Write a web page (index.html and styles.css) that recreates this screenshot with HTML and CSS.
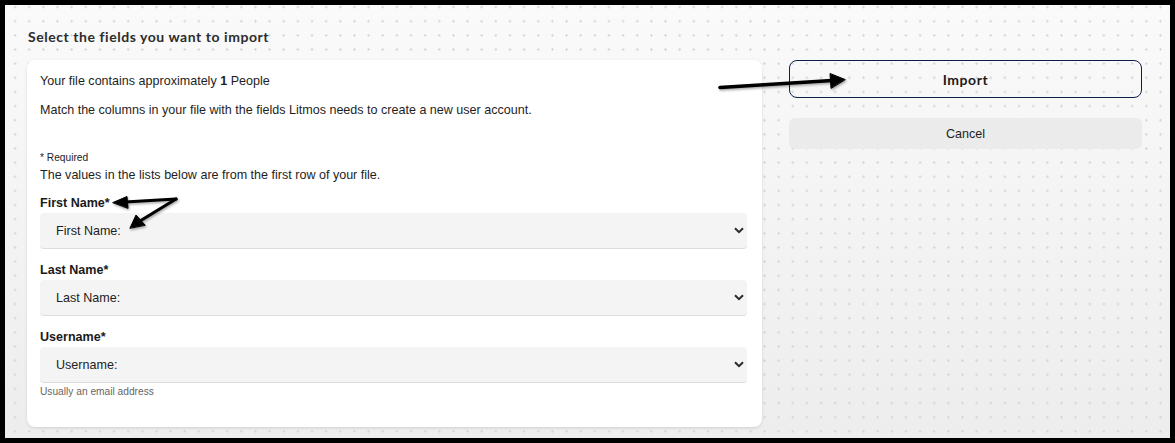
FILE: index.html
```html
<!DOCTYPE html>
<html lang="en">
<head>
<meta charset="utf-8">
<title>Import fields</title>
<link rel="stylesheet" href="styles.css">
</head>
<body>
<div class="frame">
  <h2 class="title">Select the fields you want to import</h2>
  <div class="layout">
    <section class="card">
      <p class="line">Your file contains approximately <b>1</b> People</p>
      <p class="line second">Match the columns in your file with the fields Litmos needs to create a new user account.</p>
      <p class="req">* Required</p>
      <p class="line">The values in the lists below are from the first row of your file.</p>

      <label class="flabel">First Name*</label>
      <div class="select"><span>First Name:</span><svg class="chev" width="10" height="7" viewBox="0 0 10 7"><path d="M1 1.2 L5 5.2 L9 1.2" fill="none" stroke="#2b2b2b" stroke-width="2"/></svg></div>

      <label class="flabel">Last Name*</label>
      <div class="select"><span>Last Name:</span><svg class="chev" width="10" height="7" viewBox="0 0 10 7"><path d="M1 1.2 L5 5.2 L9 1.2" fill="none" stroke="#2b2b2b" stroke-width="2"/></svg></div>

      <label class="flabel">Username*</label>
      <div class="select"><span>Username:</span><svg class="chev" width="10" height="7" viewBox="0 0 10 7"><path d="M1 1.2 L5 5.2 L9 1.2" fill="none" stroke="#2b2b2b" stroke-width="2"/></svg></div>
      <p class="hint">Usually an email address</p>
    </section>
    <aside class="actions">
      <button class="btn-import">Import</button>
      <button class="btn-cancel">Cancel</button>
    </aside>
  </div>
  <svg class="annot" width="1175" height="443" viewBox="0 0 1175 443">
    <defs>
      <filter id="sh" x="-20%" y="-20%" width="140%" height="140%">
        <feDropShadow dx="1" dy="1.5" stdDeviation="1.2" flood-color="#000" flood-opacity="0.35"/>
      </filter>
    </defs>
    <g filter="url(#sh)" fill="#000" stroke="#000" stroke-linecap="round" stroke-linejoin="round">
      <line x1="720" y1="87.5" x2="832" y2="80.5" stroke-width="3.5"/>
      <polygon points="845,79.5 830,73.5 831,88" stroke-width="1"/>
      <line x1="176" y1="199" x2="125" y2="202" stroke-width="3.2"/>
      <polygon points="113,202.5 127,196.5 128,208" stroke-width="1"/>
      <line x1="176" y1="199" x2="140" y2="221" stroke-width="3.2"/>
      <polygon points="130,228 136,215 145,225" stroke-width="1"/>
    </g>
  </svg>
</div>
</body>
</html>
```
FILE: styles.css
```css
* { box-sizing: border-box; }
html, body { margin: 0; padding: 0; background: #000; }
body { font-family: "Liberation Sans", Arial, sans-serif; color: #1e1e1e; }

.frame {
  position: relative;
  width: 1175px;
  height: 443px;
  border: 5px solid #000;
  padding: 24px 0 0 22px;
  background-color: #f3f3f3;
  background-image:
    radial-gradient(circle, #d6d6d6 0.9px, rgba(214,214,214,0) 1.4px),
    linear-gradient(#fafafa, #ededed);
  background-size: 14.15px 14.15px, 100% 100%;
  background-position: 3px -5px, 0 0;
  overflow: hidden;
}

.title {
  margin: 0 0 15px 1px;
  font-family: Lato, "Liberation Sans", sans-serif;
  font-size: 14px;
  font-weight: 700;
  line-height: 16px;
  color: #2c2c2c;
  letter-spacing: 0.55px;
}

.layout {
  display: flex;
  gap: 27px;
  align-items: flex-start;
}

.card {
  width: 735px;
  background: #fff;
  border-radius: 8px;
  box-shadow: 0 1px 3px rgba(0,0,0,0.12);
  padding: 11px 15px 28px 13px;
}

.card p { margin: 0; }
.line { font-size: 12.55px; line-height: 20px; color: #1e1e1e; }
.line b { font-weight: 700; }
.second { margin-top: 9px !important; }
.req { margin-top: 31px !important; font-size: 10.2px; line-height: 14px; color: #222; }

.flabel {
  display: block;
  margin-top: 9px;
  font-size: 12.55px;
  font-weight: 700;
  line-height: 18px;
  color: #1a1a1a;
}
.select + .flabel { margin-top: 12px; }

.select {
  margin-top: 1px;
  height: 36px;
  background: #f4f4f4;
  border-bottom: 1px solid #dcdcdc;
  border-radius: 4px;
  display: flex;
  align-items: center;
  justify-content: space-between;
  padding: 0 3px 0 16px;
  font-size: 12.55px;
  color: #222;
}
.chev { display: block; margin-top: -1px; }

.hint {
  margin-top: 2px !important;
  font-size: 10.2px;
  line-height: 14px;
  color: #666;
}

.actions {
  width: 353px;
  display: flex;
  flex-direction: column;
  gap: 20px;
}

.btn-import {
  height: 38px;
  border: 1px solid #0b1f47;
  border-radius: 8px;
  background: transparent;
  font-family: Lato, "Liberation Sans", sans-serif;
  font-size: 14px;
  font-weight: 700;
  color: #1f1a1a;
  letter-spacing: 0.55px;
}

.btn-cancel {
  height: 31px;
  border: none;
  border-radius: 6px;
  background: #ebebeb;
  font-family: "Liberation Sans", Arial, sans-serif;
  font-size: 12.55px;
  color: #1e1e1e;
}

.annot {
  position: absolute;
  left: -5px;
  top: -5px;
  pointer-events: none;
}
```
